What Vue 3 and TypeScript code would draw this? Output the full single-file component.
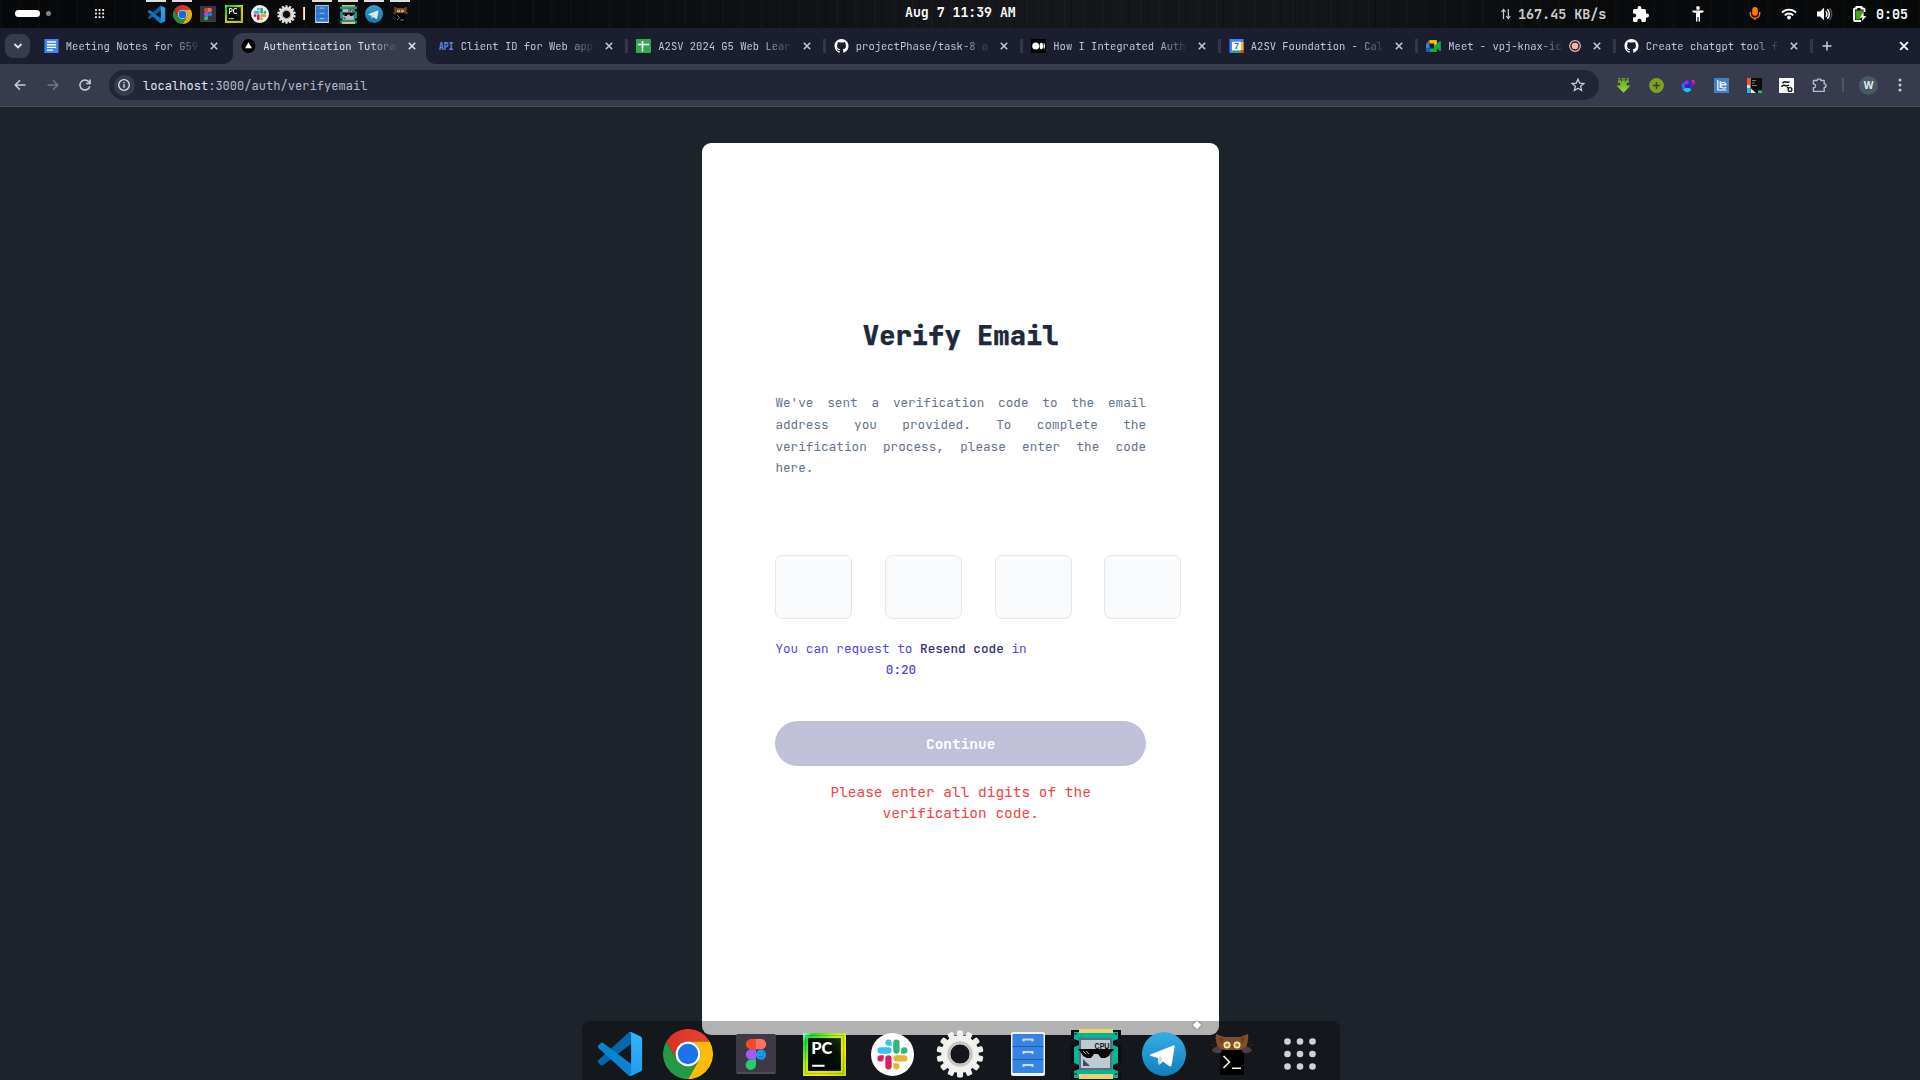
<script setup lang="ts">
interface Tab {
  icon: string
  title: string
  active?: boolean
  recording?: boolean
  divider?: boolean
}

interface Launcher {
  icon: string
  running?: boolean
}

const tabs: Tab[] = [
  { icon: 'docs', title: 'Meeting Notes for G59' },
  { icon: 'vercel', title: 'Authentication Tutora', active: true },
  { icon: 'api', title: 'Client ID for Web app', divider: true },
  { icon: 'sheets', title: 'A2SV 2024 G5 Web Lear', divider: true },
  { icon: 'github', title: 'projectPhase/task-8 a', divider: true },
  { icon: 'medium', title: 'How I Integrated Auth', divider: true },
  { icon: 'calendar', title: 'A2SV Foundation - Cal', divider: true },
  { icon: 'meet', title: 'Meet - vpj-knax-ic', recording: true, divider: true },
  { icon: 'github', title: 'Create chatgpt tool f', divider: true },
]

const pinned: Launcher[] = [
  { icon: 'vscode', running: true },
  { icon: 'chrome', running: true },
  { icon: 'figma' },
  { icon: 'pycharm' },
  { icon: 'slack' },
  { icon: 'gear' },
]

const opened: Launcher[] = [
  { icon: 'files', running: true },
  { icon: 'cpu', running: true },
  { icon: 'telegram', running: true },
  { icon: 'kitty', running: true },
]

const dock: string[] = [...pinned, ...opened].map((l) => l.icon).concat('apps')
const extensions: string[] = ['download', 'plus', 'gem', 'lexi', 'mosaic', 'sketch', 'puzzle-outline']
const digits: number[] = [0, 1, 2, 3]
const teeth: number[] = Array.from({ length: 14 }, (_, i) => (i * 360) / 14)
const dots: number[] = [0, 1, 2]
</script>

<template>
  <div class="desktop">
    <svg class="sprite" aria-hidden="true">
      <defs>
        <linearGradient id="g-vs" x1="0" y1="0" x2="0" y2="1"><stop offset="0" stop-color="#33b5f6" /><stop offset="1" stop-color="#1f9cf0" /></linearGradient>
        <linearGradient id="g-red" x1="0" y1="0" x2="1" y2="0"><stop offset="0" stop-color="#d93025" /><stop offset="1" stop-color="#ea4335" /></linearGradient>
        <linearGradient id="g-pc" x1="0" y1="0" x2="1" y2="1"><stop offset="0" stop-color="#b8ffe0" /><stop offset=".12" stop-color="#1edb30" /><stop offset=".4" stop-color="#b8f01c" /><stop offset=".65" stop-color="#f2e70c" /><stop offset="1" stop-color="#b4dc12" /></linearGradient>
        <linearGradient id="g-pcin" x1="0" y1="1" x2="1" y2="0"><stop offset="0" stop-color="#000" /><stop offset=".7" stop-color="#041006" /><stop offset="1" stop-color="#16351a" /></linearGradient>
        <linearGradient id="g-tg" x1="0" y1="0" x2="0" y2="1"><stop offset="0" stop-color="#37aee2" /><stop offset="1" stop-color="#0e80bf" /></linearGradient>
        <linearGradient id="g-dl" x1="0" y1="0" x2="0" y2="1"><stop offset="0" stop-color="#6aa51c" /><stop offset="1" stop-color="#93d936" /></linearGradient>
      </defs>

      <symbol id="vscode" viewBox="-1 -1 26 26">
        <path fill="#0468ab" d="M23.15 2.587L18.21.21a1.494 1.494 0 0 0-1.705.29L.327 15.26a1 1 0 0 0 0 1.479L1.65 17.94a1 1 0 0 0 1.276.057L18 6.552z" />
        <path fill="#0a84d0" d="M18 17.448L2.926 6.002a1 1 0 0 0-1.276.057L.327 7.261A1 1 0 0 0 .327 8.74L16.506 23.5a1.492 1.492 0 0 0 1.704.29L22 21.5z" />
        <path fill="url(#g-vs)" d="M16.8.3c.5-.3 1-.3 1.41-.09l4.94 2.377A1.5 1.5 0 0 1 24 3.94v16.12a1.5 1.5 0 0 1-.848 1.352L18.21 23.79c-.5.2-1 .15-1.5-.1.8.3 1.3-.1 1.3-1V1.4c0-.9-.5-1.3-1.21-1.1z" />
      </symbol>
      <symbol id="chrome" viewBox="0 0 48 48">
        <path fill="url(#g-red)" d="M3.2 12A24 24 0 0 1 44.8 12H24A12 12 0 0 0 13.6 30z" />
        <path fill="#fbbc05" d="M44.8 12A24 24 0 0 1 24 48L34.4 30A12 12 0 0 0 24 12z" />
        <path fill="#259a45" d="M24 48A24 24 0 0 1 3.2 12L13.6 30A12 12 0 0 0 34.4 30z" />
        <circle cx="24" cy="24" r="12" fill="#fff" /><circle cx="24" cy="24" r="9.8" fill="#1a73e8" />
      </symbol>
      <symbol id="figma" viewBox="0 0 40 40">
        <rect width="40" height="40" rx="2" fill="#3e3947" /><path d="M1 39h38" stroke="#615b6b" />
        <path fill="#f24e1e" d="M20 5h-5a5 5 0 0 0 0 10.3h5z" /><path fill="#ff7262" d="M20 5h5a5 5 0 0 1 0 10.3h-5z" />
        <path fill="#a259ff" d="M20 15.3h-5a5 5 0 0 0 0 10.3h5z" /><circle cx="25" cy="20.6" r="5.1" fill="#1a9be8" />
        <path fill="#24cb71" d="M20 25.6h-5A5.2 5.2 0 1 0 20 31z" />
        <path d="M22.5 19.5h1M27 19h1M23 22.5q2 1.5 4 0" stroke="#0a6caf" fill="none" />
      </symbol>
      <symbol id="pycharm" viewBox="0 0 42 42">
        <rect width="42" height="42" fill="url(#g-pc)" /><rect x="2.5" y="2.5" width="37" height="37" fill="none" stroke="#0003" />
        <rect x="5" y="5" width="32" height="32" fill="url(#g-pcin)" />
        <text x="8" y="20.5" font-family="Lato, sans-serif" font-weight="900" font-size="16" fill="#fff">PC</text>
        <rect x="9" y="31" width="12" height="2" fill="#fff" />
      </symbol>
      <symbol id="slack" viewBox="0 0 42 42">
        <circle cx="21" cy="21" r="21" fill="#fff" />
        <g transform="translate(6.3 6.3) scale(1.22)">
          <path fill="#e01e5a" d="M5.042 15.165a2.528 2.528 0 0 1-2.52 2.523A2.528 2.528 0 0 1 0 15.165a2.527 2.527 0 0 1 2.522-2.52h2.52v2.52zM6.313 15.165a2.527 2.527 0 0 1 2.521-2.52 2.527 2.527 0 0 1 2.521 2.52v6.313A2.528 2.528 0 0 1 8.834 24a2.528 2.528 0 0 1-2.521-2.522v-6.313z" />
          <path fill="#36c5f0" d="M8.834 5.042a2.528 2.528 0 0 1-2.521-2.52A2.528 2.528 0 0 1 8.834 0a2.528 2.528 0 0 1 2.521 2.522v2.52H8.834zM8.834 6.313a2.528 2.528 0 0 1 2.521 2.521 2.528 2.528 0 0 1-2.521 2.521H2.522A2.528 2.528 0 0 1 0 8.834a2.528 2.528 0 0 1 2.522-2.521h6.312z" />
          <path fill="#2eb67d" d="M18.956 8.834a2.528 2.528 0 0 1 2.522-2.521A2.528 2.528 0 0 1 24 8.834a2.528 2.528 0 0 1-2.522 2.521h-2.522V8.834zM17.688 8.834a2.528 2.528 0 0 1-2.523 2.521 2.527 2.527 0 0 1-2.52-2.521V2.522A2.527 2.527 0 0 1 15.165 0a2.528 2.528 0 0 1 2.523 2.522v6.312z" />
          <path fill="#ecb22e" d="M15.165 18.956a2.528 2.528 0 0 1 2.523 2.522A2.528 2.528 0 0 1 15.165 24a2.527 2.527 0 0 1-2.52-2.522v-2.522h2.52zM15.165 17.688a2.527 2.527 0 0 1-2.52-2.523 2.526 2.526 0 0 1 2.52-2.52h6.313A2.527 2.527 0 0 1 24 15.165a2.528 2.528 0 0 1-2.522 2.523h-6.313z" />
        </g>
      </symbol>
      <symbol id="gear" viewBox="-24 -24 48 48">
        <rect v-for="a in teeth" :key="a" x="-3" y="-23.5" width="6" height="9" rx="1.6" fill="#f1efec" :transform="`rotate(${a})`" />
        <circle r="14.3" fill="none" stroke="#f3f1ee" stroke-width="9" />
        <circle r="11.3" fill="none" stroke="#c9c6c1" stroke-width="3" />
      </symbol>
      <symbol id="files" viewBox="0 0 34 44">
        <rect width="34" height="44" rx="2" fill="#f2f1f0" /><rect x="1.5" y="2" width="31" height="39" rx="1" fill="#3584e4" />
        <path d="M1.5 14.5h31M1.5 27.5h31" stroke="#1a5fb4" />
        <path d="M12.5 9.5V7.5h9v2M12.5 22v-2h9v2M12.5 35v-2h9v2" fill="none" stroke="#d6d3cf" stroke-width="2" />
      </symbol>
      <symbol id="cpu" viewBox="0 0 50 50">
        <path d="M0 1h50v9h-4v6h4v19h-4v6h4v9H0v-9h4v-6H0V16h4v-6H0z" fill="#0b0d10" />
        <path d="M3 3h44v7l-5 2v4l5 2v16l-5 2v4l5 2v7H3v-7l5-2v-4l-5-2V18l5-2v-4l-5-2z" fill="#00b795" />
        <path d="M8 0h34v4H8zM8 45h34v5H8z" fill="#f1d06f" />
        <rect x="8" y="9" width="33" height="32" fill="#626b80" /><rect x="10" y="11" width="29" height="28" fill="#bdcad1" />
        <text x="23.5" y="19.5" font-family="Liberation Sans, sans-serif" font-weight="700" font-size="9.5" textLength="15" lengthAdjust="spacingAndGlyphs" fill="#111">CPU</text>
        <path d="M7 20h36l-1 2-2 1-2 4-4 2h-4l-3-4h-4l-3 4h-4l-4-2-3-5z" fill="#050505" />
        <path d="M12 22l3 3M15 22l3 3" stroke="#aaa" /><path d="M12 30l7 7h-7z" fill="#424b66" />
        <path d="M4.5 4v2M45 4v2M4.5 44v2M45 44v2" stroke="#274c4b" stroke-width="2.5" />
      </symbol>
      <symbol id="telegram" viewBox="0 0 44 44">
        <circle cx="22" cy="22" r="22" fill="url(#g-tg)" />
        <path fill="#fff" d="M8.3 22.4L31.2 13.4c1.2-.4 1.7.4 1.4 1.6L29.6 33c-.3 1.5-1.3 1.8-2.5 1.1l-6.2-4.7-3.3 3c-.6.3-1 .3-1-.5l-.7-5.9-7-2.1c-1.3-.4-1.3-1-.6-1.5z" />
        <path fill="#bdd9e9" d="M16.3 25.8l12-8-8.3 8.8-1.8 5.2-1.3.4z" /><path fill="#fff" d="M20.8 26.4l8.9-9.7-11.6 7.8z" />
      </symbol>
      <symbol id="kitty" viewBox="0 0 44 44">
        <path d="M0 8l10 4M0 13h9M44 8l-10 4M44 13h-9M2 18l8-3M42 18l-8-3" stroke="#2c1a12" stroke-width="1.3" />
        <path d="M6 2l8 3h16l8-3c1 6-1 9-1.5 13-3 5-25 5-29 0C7 11 5 8 6 2z" fill="#814d2a" /><path d="M9 5l5 2-3 4zM35 5l-5 2 3 4z" fill="#6b3a1d" />
        <circle cx="17" cy="13" r="3.5" fill="#eceac0" /><circle cx="27" cy="13" r="3.5" fill="#eceac0" />
        <circle cx="17" cy="13" r="1.8" fill="#989000" /><circle cx="27" cy="13" r="1.8" fill="#989000" />
        <rect x="10" y="18" width="24" height="25" rx="1.5" fill="#000" />
        <path d="M2 18c4-5 8-4 10 1-1 3-8 3-10-1zM42 18c-4-5-8-4-10 1 1 3 8 3 10-1z" fill="#4e4240" />
        <path d="M13.5 24l6 6-6 6M22 36.2h9" fill="none" stroke="#f4f4f4" stroke-width="1.6" />
      </symbol>
      <symbol id="apps" viewBox="0 0 32 32">
        <g fill="#d0d0dc"><template v-for="r in dots" :key="r"><circle v-for="c in dots" :key="c" :cx="3.5 + c * 12.5" :cy="3.5 + r * 12.5" r="3.3" /></template></g>
      </symbol>

      <symbol id="docs" viewBox="0 0 14 14"><rect width="14" height="14" fill="#4285f4" /><path d="M2.5 3h9M2.5 5.7h9M2.5 8.4h9M2.5 11.1h6" stroke="#fff" stroke-width="1.4" /></symbol>
      <symbol id="vercel" viewBox="0 0 15 15"><circle cx="7.5" cy="7.5" r="7.5" fill="#000" /><path d="M7.5 3.5l3.7 6.5H3.8z" fill="#fff" /></symbol>
      <symbol id="api" viewBox="0 0 15 14"><text x="0" y="11" font-family="JetBrains Mono, Liberation Mono, monospace" font-weight="800" font-size="10.5" textLength="14.5" lengthAdjust="spacingAndGlyphs" fill="#5c85e6">API</text></symbol>
      <symbol id="sheets" viewBox="0 0 15 14"><rect width="15" height="14" rx=".8" fill="#34a853" /><path d="M2 5.5h11M6.5 2v10.5" stroke="#fff" stroke-width="1.6" /></symbol>
      <symbol id="github" viewBox="0 0 16 16"><path fill="#fff" d="M8 0C3.58 0 0 3.58 0 8c0 3.54 2.29 6.53 5.47 7.59.4.07.55-.17.55-.38 0-.19-.01-.82-.01-1.49-2.01.37-2.53-.49-2.69-.94-.09-.23-.48-.94-.82-1.13-.28-.15-.68-.52-.01-.53.63-.01 1.08.58 1.23.82.72 1.21 1.87.87 2.33.66.07-.52.28-.87.51-1.07-1.78-.2-3.64-.89-3.64-3.95 0-.87.31-1.59.82-2.15-.08-.2-.36-1.02.08-2.12 0 0 .67-.21 2.2.82.64-.18 1.32-.27 2-.27s1.36.09 2 .27c1.53-1.04 2.2-.82 2.2-.82.44 1.1.16 1.92.08 2.12.51.56.82 1.27.82 2.15 0 3.07-1.87 3.75-3.65 3.95.29.25.54.73.54 1.48 0 1.07-.01 1.93-.01 2.2 0 .21.15.46.55.38A8.01 8.01 0 0 0 16 8c0-4.42-3.58-8-8-8z" /></symbol>
      <symbol id="medium" viewBox="0 0 15 14"><rect width="15" height="14" fill="#000" /><circle cx="4.7" cy="7" r="3.5" fill="#fff" /><ellipse cx="10.3" cy="7" rx="1.7" ry="3.3" fill="#fff" /><ellipse cx="13.2" cy="7" rx=".7" ry="2.9" fill="#fff" /></symbol>
      <symbol id="calendar" viewBox="0 0 14 14"><rect width="14" height="14" fill="#4285f4" /><path d="M11 3h3v8h-3z" fill="#fbbc04" /><path d="M3 11h8v3H3z" fill="#34a853" /><path d="M11 11h3v3h-3z" fill="#ea4335" /><rect x="2.5" y="2.8" width="8.8" height="8.6" fill="#fff" /><text x="7" y="10.3" text-anchor="middle" font-family="Liberation Sans, sans-serif" font-weight="700" font-size="8.5" fill="#1a66d8">7</text></symbol>
      <symbol id="meet" viewBox="0 0 15 14"><path d="M0 4.5L3.5 1v3.5z" fill="#ea4335" /><path d="M3.5 1H10q1 0 1 1v4L8 7V4.5H3.5z" fill="#fbbc04" /><path d="M0 4.5h3.5v5H0z" fill="#2684fc" /><path d="M0 9.5h3.5V13H1q-1 0-1-1z" fill="#0066da" /><path d="M3.5 9.5H8V7l3-2.5 3-2.5q.8-.3.8.5v9q0 .8-.8.4L11 9.5V12q0 1-1 1H3.5z" fill="#18a84c" /></symbol>

      <symbol id="download" viewBox="0 0 14 14"><path d="M2 0h2.2v1.300H2zM5.900 0h2.200v1.300H5.900zM9.800 0H12v1.300H9.800zM2 2h2.700v1.200h.8V0h.4v2h2.200V0h.4v3.200h.8V2H12v2.500h-2V7h3.600L7 13.800.4 7H4V4.500H2z" fill="url(#g-dl)" /></symbol>
      <symbol id="plus" viewBox="0 0 15 15"><circle cx="7.5" cy="7.5" r="7.4" fill="#7fa022" /><path d="M7.5 4v7M4 7.5h7" stroke="#39491a" stroke-width="1.6" /></symbol>
      <symbol id="gem" viewBox="0 0 15 15"><path d="M6 2l4 1.5 1.5 4-1 5L6 14.5 1.5 12 .5 6z" fill="#3b2fd6" /><path d="M6 2L.5 6l3 1.500L8 5z" fill="#7a3af0" /><path d="M.5 6L1.500 12l3-2-1-2.500z" fill="#1a7be8" /><path d="M4.500 10l-3 2L6 14.500l4.500-2-2-2.500z" fill="#12d0c8" /><path d="M3.500 7.500l5-2.500 2 1.500L8.500 10h-4z" fill="#3a1fc0" /><path d="M10 2.500l1-1 2.300.5.600 3-1.600 1.800-.8-.3.300-2z" fill="#f014b4" /></symbol>
      <symbol id="lexi" viewBox="0 0 15 15"><rect width="15" height="15" fill="#427fc9" /><path d="M3.800 2v10h8.700M6.200 3v7M6.500 6.800H12c0-3.300-5.500-3.300-5.500.2 0 3.300 4 3.500 5.700 2.200" stroke="#fff" stroke-width="1.2" fill="none" /></symbol>
      <symbol id="mosaic" viewBox="0 0 15 15"><rect width="15" height="15" fill="#0c0c0c" /><path d="M0 0h3v7H0z" fill="#f0562b" /><path d="M0 7h3v3H0z" fill="#ddd" /><path d="M0 10h3v5H0z" fill="#24b5f0" /><path d="M3.500 0v15" stroke="#777" /><path d="M5 2.500h4M5 5h2.500M5 7.500h5" stroke="#999" stroke-width=".8" /><path d="M4 10.500l5 4.500H4z" fill="#eee" /><path d="M11 12.500h4V15h-4z" fill="#22c48c" /></symbol>
      <symbol id="sketch" viewBox="0 0 15 15"><rect width="15" height="15" fill="#f8f8f8" /><path d="M3.500 5.200c2.500-3.500 4 .8 7-1.700M2.500 8.700c2.500-3.500 4 .8 7.500-1.700" fill="none" stroke="#111" stroke-width="1.5" /><path d="M8 9l2 1.500" stroke="#111" stroke-width="1.2" /><circle cx="11" cy="11.500" r="1.900" fill="none" stroke="#111" stroke-width="1.3" /></symbol>
      <symbol id="puzzle-outline" viewBox="0 0 16 16"><path d="M1.500 2.700h4c0-2.400 4-2.400 4 0H13v3.600c2.600 0 2.600 3.800 0 3.800v4.200H1.500v-3.900c3 .3 3-4.200 0-3.900z" fill="none" stroke="#b6b9d6" stroke-width="1.500" stroke-linejoin="round" /></symbol>
      <symbol id="close" viewBox="0 0 10 10"><path d="M1.800 1.800l6.400 6.400M8.200 1.800L1.800 8.200" stroke="currentColor" stroke-width="1.6" /></symbol>
    </svg>

    <header class="panel">
      <span class="pill"></span><span class="workspace"></span>
      <svg class="launch-grid" viewBox="0 0 10 10">
        <g fill="#f2f2f2"><template v-for="r in dots" :key="r"><rect v-for="c in dots" :key="c" :x="c * 3.6" :y="r * 3.6" width="1.9" height="1.9" rx=".4" /></template></g>
      </svg>
      <nav class="tasks">
        <span v-for="l in pinned" :key="l.icon" class="task" :class="{ running: l.running }"><svg :class="['small', l.icon]"><use :href="'#' + l.icon" /></svg></span>
        <i class="task-split"></i>
        <span v-for="l in opened" :key="l.icon" class="task" :class="{ running: l.running }"><svg :class="['small', l.icon]"><use :href="'#' + l.icon" /></svg></span>
      </nav>
      <time class="clock">Aug 7 11:39 AM</time>
      <div class="status">
        <svg width="10" height="12" viewBox="0 0 10 12"><path d="M2.5 11V2M.5 4l2-2.500 2 2.500M7.300 1v9M5.300 8l2 2.500 2-2.500" fill="none" stroke="#cfcfcf" stroke-width="1.2" /></svg>
        <span class="net">167.45 KB/s</span>
        <svg class="s-puzzle" viewBox="2 1 21 21"><path fill="#fff" d="M20.5 11H19V7a2 2 0 0 0-2-2h-4V3.5a2.5 2.5 0 0 0-5 0V5H4a2 2 0 0 0-2 2v3.800h1.500a2.700 2.700 0 0 1 0 5.400H2V20a2 2 0 0 0 2 2h3.800v-1.500a2.700 2.700 0 0 1 5.400 0V22H17a2 2 0 0 0 2-2v-4h1.500a2.500 2.500 0 0 0 0-5z" /></svg>
        <svg class="s-access" viewBox="0 0 12 16"><circle cx="6" cy="2" r="1.9" fill="#fff" /><path d="M.5 4.500h11v1.800L8 7v8.500H6.600V11H5.400v4.500H4V7L.5 6.300z" fill="#fff" /></svg>
        <svg class="s-mic" viewBox="0 0 12 16"><rect x="3" y="1" width="6" height="9.5" rx="3" fill="#ff7800" /><path d="M1 6.500V8a5 5 0 0 0 10 0V6.500M6 13v2" fill="none" stroke="#ff7800" stroke-width="1.5" /></svg>
        <svg class="s-wifi" viewBox="0 0 16 13"><path d="M1 5.500a10 10 0 0 1 14 0M3.700 8.300a6 6 0 0 1 8.600 0" fill="none" stroke="#fff" stroke-width="1.8" /><circle cx="8" cy="10.500" r="1.9" fill="#fff" /></svg>
        <svg class="s-vol" viewBox="0 0 16 14"><path d="M0 4.500h3L7 .8v12.400L3 9.500H0z" fill="#fff" /><path d="M8.800 4.300a3.800 3.800 0 0 1 0 5.400M10.300 2.300a6.500 6.500 0 0 1 0 9.400" fill="none" stroke="#fff" stroke-width="1.5" /><path d="M12.500 1a9 9 0 0 1 0 12" fill="none" stroke="#555" stroke-width="1.4" /></svg>
        <svg class="s-bat" viewBox="0 0 14 16"><path d="M3.500 2.500V1h5v1.500h2q1 0 1 1V6M8 15H2q-1 0-1-1V3.500q0-1 1-1h2" fill="none" stroke="#fff" stroke-width="1.9" /><path d="M2.500 4.500h7.500v4.500l-3 4.500H2.500z" fill="#4a9e14" /><path d="M10.500 6l-3.500 5.500h2.500L8.500 15.500l5-5.500h-2.800z" fill="#fff" /></svg>
        <span class="remain">0:05</span>
      </div>
    </header>

    <div class="tabstrip">
      <button class="tab-search"><svg width="10" height="8" viewBox="0 0 10 8"><path d="M1.500 2L5 5.500 8.500 2" fill="none" stroke="#e1e2ee" stroke-width="1.8" /></svg></button>
      <div v-for="(t, i) in tabs" :key="i" class="tab" :class="{ active: t.active }">
        <svg class="fav"><use :href="'#' + t.icon" /></svg>
        <span class="tab-title" :class="{ short: t.recording }">{{ t.title }}</span>
        <svg v-if="t.recording" class="rec" viewBox="0 0 12 12"><circle cx="6" cy="6" r="5.3" fill="none" stroke="#f5b5ae" stroke-width="1.2" /><circle cx="6" cy="6" r="3.3" fill="#f5b5ae" /></svg>
        <svg class="close"><use href="#close" /></svg>
        <i v-if="t.divider" class="divider"></i>
      </div>
      <svg class="new-tab" viewBox="0 0 10 10"><path d="M5 .5v9M.5 5h9" stroke="#c9cbe0" stroke-width="1.5" /></svg>
      <svg class="win-close"><use href="#close" /></svg>
    </div>

    <div class="toolbar">
      <svg class="nav" viewBox="0 0 12 12"><path d="M11.500 6H1.500M6 1.200L1.200 6 6 10.800" fill="none" stroke="#c9cbdc" stroke-width="1.5" /></svg>
      <svg class="nav fwd" viewBox="0 0 12 12"><path d="M.5 6h10M6 1.200L10.800 6 6 10.800" fill="none" stroke="#737688" stroke-width="1.5" /></svg>
      <svg class="nav reload" viewBox="0 0 12 12"><path d="M10.800 7.200A5 5 0 1 1 9.800 2.800L11 4.200M11.100.6v4H7.200" fill="none" stroke="#c9cbdc" stroke-width="1.5" /></svg>
      <div class="omnibox">
        <span class="site-info"><svg width="12" height="12" viewBox="0 0 12 12"><circle cx="6" cy="6" r="5.3" fill="none" stroke="#e1e3f0" stroke-width="1.3" /><path d="M6 5.200v3.600M6 3v1.300" stroke="#e1e3f0" stroke-width="1.3" /></svg></span>
        <span class="url"><b>localhost</b>:3000/auth/verifyemail</span>
        <svg class="star" viewBox="0 0 14 14"><path d="M7 1.200l1.700 3.900 4.200.4-3.200 2.800.9 4.200L7 10.300l-3.600 2.200.9-4.200L1.100 5.500l4.200-.4z" fill="none" stroke="#c9cbdc" stroke-width="1.3" /></svg>
      </div>
      <div class="exts"><svg v-for="e in extensions" :key="e" class="ext"><use :href="'#' + e" /></svg></div>
      <i class="bar-split"></i>
      <span class="avatar">W</span>
      <svg class="kebab" viewBox="0 0 4 14"><g fill="#c9cbdc"><circle cx="2" cy="2" r="1.5" /><circle cx="2" cy="7" r="1.5" /><circle cx="2" cy="12" r="1.5" /></g></svg>
    </div>

    <main class="page">
      <section class="card">
        <h1>Verify Email</h1>
        <p class="lead">We've sent a verification code to the email address you provided. To complete the verification process, please enter the code here.</p>
        <div class="code"><input v-for="d in digits" :key="d" type="text" maxlength="1" /></div>
        <p class="resend">You can request to <b>Resend code</b> in<br /><span>0:20</span></p>
        <button class="continue" disabled>Continue</button>
        <p class="error">Please enter all digits of the verification code.</p>
      </section>
    </main>

    <footer class="dock">
      <span v-for="d in dock" :key="d" class="dock-item"><svg :class="['big', d]"><use :href="'#' + d" /></svg></span>
    </footer>
    <i class="pointer"></i>
  </div>
</template>

<style>
body {
  background: #1d232a;
  overflow: hidden;
}
</style>

<style scoped>
.desktop {
  position: relative;
  display: flex;
  flex-direction: column;
  width: 1920px;
  height: 1080px;
  overflow: hidden;
  background: #1d232a;
  font-family: "JetBrains Mono", "DejaVu Sans Mono", monospace;
}
.desktop *, .desktop { box-sizing: border-box; }
svg { display: block; flex: none; overflow: visible; }
i { display: block; flex: none; }
.sprite { position: absolute; width: 0; height: 0; }

/* system panel */
.panel {
  display: flex;
  align-items: center;
  height: 28px;
  flex: none;
  color: #fff;
  font-size: 13.3px;
  line-height: 16px;
  white-space: pre;
  background:
    repeating-linear-gradient(90deg, #ffffff04 0 2px, #0000 2px 7px, #00000030 7px 8px, #0000 8px 19px),
    linear-gradient(90deg, #070809, #0b0c0e 30%, #15171a 52%, #131518 70%, #0a0b0c 82%, #07080a);
}
.pill { width: 25px; height: 7px; margin: 0 0 1px 15px; border-radius: 4px; background: #fff; }
.workspace { width: 5px; height: 5px; margin: 0 0 1px 6px; border-radius: 50%; background: #858585; }
.launch-grid { width: 10px; height: 10px; margin-left: 44px; margin-bottom: 1px; }
.tasks { display: flex; align-items: stretch; height: 28px; margin-left: 38px; }
.task { display: flex; align-items: center; justify-content: center; width: 26px; border-top: 2px solid #0000; }
.task.running { border-image: linear-gradient(90deg, #0000 3px, #dedede 3px 23px, #0000 23px) 2 0 0 0; }
.small { width: 19px; height: 19px; margin-bottom: 2px; opacity: .92; }
.small.figma { width: 16px; height: 16px; }
.small.pycharm, .small.slack { width: 18px; height: 18px; }
.small.files, .small.telegram { width: 18px; height: 18px; }
.small.kitty { width: 17px; height: 17px; }
.task-split { width: 2px; height: 13px; margin: 7px 4px 0; background: linear-gradient(90deg, #ff9f2f, #fff); }
.clock { width: 113px; margin-left: 492px; margin-bottom: 2px; font-weight: 600; font-size: 13.2px; }
.status { display: flex; align-items: center; margin-left: 483px; padding-bottom: 1px; }
.net { width: 89px; margin-left: 7px; color: #cfcfcf; font-weight: 600; font-size: 13.4px; }
.s-puzzle { width: 16px; height: 16px; margin-left: 26px; }
.s-access { width: 12px; height: 16px; margin-left: 43px; }
.s-mic { width: 12px; height: 15px; margin-left: 44.5px; }
.s-wifi { width: 16px; height: 13px; margin-left: 20.5px; }
.s-vol { width: 16px; height: 14px; margin-left: 19.5px; }
.s-bat { width: 14px; height: 16px; margin-left: 20.5px; }
.remain { margin-left: 9px; font-weight: 600; }

/* browser chrome */
.tabstrip { display: flex; align-items: center; height: 36px; flex: none; background: #1a1e2e; }
.tab-search { display: flex; align-items: center; justify-content: center; width: 25px; height: 24px; margin-left: 5px; margin-right: 5.8px; padding: 0; border: 0; border-radius: 8px; background: #383b4d; }
.tab { position: relative; display: flex; align-items: center; align-self: flex-end; width: 197.5px; height: 31px; padding: 0 0 5px 8px; flex: none; color: #c3c5dc; }
.tab > * { position: relative; }
.tab.active { color: #dfe1f0; }
.tab.active::before { content: ""; position: absolute; inset: 0 5px 0 0; border-radius: 9px 9px 0 0; background: #383b4d; }
.tab.active::after {
  content: "";
  position: absolute;
  left: -9px;
  right: -4px;
  bottom: 0;
  height: 9px;
  background:
    radial-gradient(circle at 0 0, #0000 8.5px, #383b4d 9px) left / 9px 9px no-repeat,
    radial-gradient(circle at 100% 0, #0000 8.5px, #383b4d 9px) right / 9px 9px no-repeat;
}
.fav { width: 15px; height: 14px; }
.tab-title { width: 133.5px; margin-left: 7px; overflow: hidden; white-space: pre; font-size: 10.5px; line-height: 16px; mask-image: linear-gradient(90deg, #000 105px, #0000 136px); }
.tab-title.short { width: 115px; mask-image: linear-gradient(90deg, #000 90px, #0000 118px); }
.rec { width: 12px; height: 12px; margin-left: 6px; margin-right: .5px; }
.close { width: 10px; height: 10px; margin-left: 10px; }
.divider { width: 3px; height: 14px; margin-left: 11px; background: #333649; }
.new-tab { width: 10px; height: 10px; margin-left: 8.5px; }
.win-close { width: 12px; height: 12px; margin-left: 66.5px; color: #fff; }
.toolbar { display: flex; align-items: center; height: 43px; flex: none; border-bottom: 1px solid #4a4c55; background: #383b4d; }
.nav { width: 12px; height: 12px; margin-left: 14px; }
.nav.fwd { margin-left: 21px; }
.nav.reload { margin-left: 20px; }
.omnibox { display: flex; align-items: center; width: 1490px; height: 30px; margin-left: 18px; border-radius: 15px; background: #212538; }
.site-info { display: flex; align-items: center; justify-content: center; width: 21px; height: 21px; margin-left: 4.5px; border-radius: 50%; background: #383b4d; }
.url { flex: 1; margin-left: 8.5px; padding-top: 1px; color: #b6b9cb; font-size: 12.07px; line-height: 16px; }
.url b { color: #e1e3f0; font-weight: 400; }
.star { width: 14px; height: 14px; margin-right: 14px; }
.exts { display: flex; gap: 17.7px; margin-left: 17px; }
.ext { width: 15px; height: 15px; }
.bar-split { width: 2px; height: 14px; margin-left: 15px; background: #505366; }
.avatar { width: 19px; height: 19px; margin-left: 15px; border-radius: 50%; background: #455a64; color: #e8eef0; font: 700 10px/19px "Open Sans", sans-serif; text-align: center; }
.kebab { width: 4px; height: 14px; margin-left: 20px; }

/* page */
.page { display: flex; justify-content: center; align-items: flex-start; flex: 1; }
.card { display: flex; flex-direction: column; width: 517px; height: 891.5px; margin: 36px 0 0 1px; padding: 170px 73px 0 73.4px; border-radius: 9px; background: #fff; }
h1 { margin: 0; color: #1e293b; font-size: 27.2px; line-height: 45px; font-weight: 800; text-align: center; -webkit-text-stroke: .25px; }
.lead { margin: 34px 0 0; color: #64748b; font-size: 12.7px; line-height: 21.8px; text-align: justify; }
.code { display: flex; gap: 32.6px; margin-top: 75.8px; }
.code input { flex: none; width: 77px; height: 64px; border: 1px solid #e5e7eb; border-radius: 7px; background: #f9fafc; }
.resend { align-self: flex-start; margin: 19px 0 0; color: #4f46e5; font-size: 12.7px; line-height: 21.2px; text-align: center; }
.resend b { color: #312e81; font-weight: 500; }
.resend span { font-weight: 500; }
.continue { height: 45px; margin-top: 40.4px; padding: 0; border: 0; border-radius: 23px; background: #c1c0d9; color: #fff; font: 600 14.45px/45px "JetBrains Mono", "DejaVu Sans Mono", monospace; }
.error { margin: 15px 30px 0; color: #ef4444; font-size: 14.48px; line-height: 21.3px; text-align: center; }

/* dock overlays the page */
.dock { position: absolute; left: 582px; bottom: 0; display: flex; width: 758px; height: 59px; padding: 8px 4px 0; border-radius: 8px 8px 0 0; background: #0000004d; }
.dock-item { display: flex; align-items: center; justify-content: center; width: 68px; height: 50px; flex: none; }
.big { width: 44px; height: 44px; }
.big.vscode { width: 48px; height: 48px; }
.big.chrome, .big.cpu { width: 50px; height: 50px; }
.big.figma { width: 40px; height: 40px; }
.big.pycharm, .big.slack { width: 43px; height: 43px; }
.big.gear { width: 48px; height: 48px; }
.big.apps { width: 32px; height: 32px; }
.pointer { position: absolute; left: 1193.5px; top: 1022px; width: 6px; height: 6px; background: #fff; transform: rotate(45deg); box-shadow: 0 0 2px #0008; }
</style>
